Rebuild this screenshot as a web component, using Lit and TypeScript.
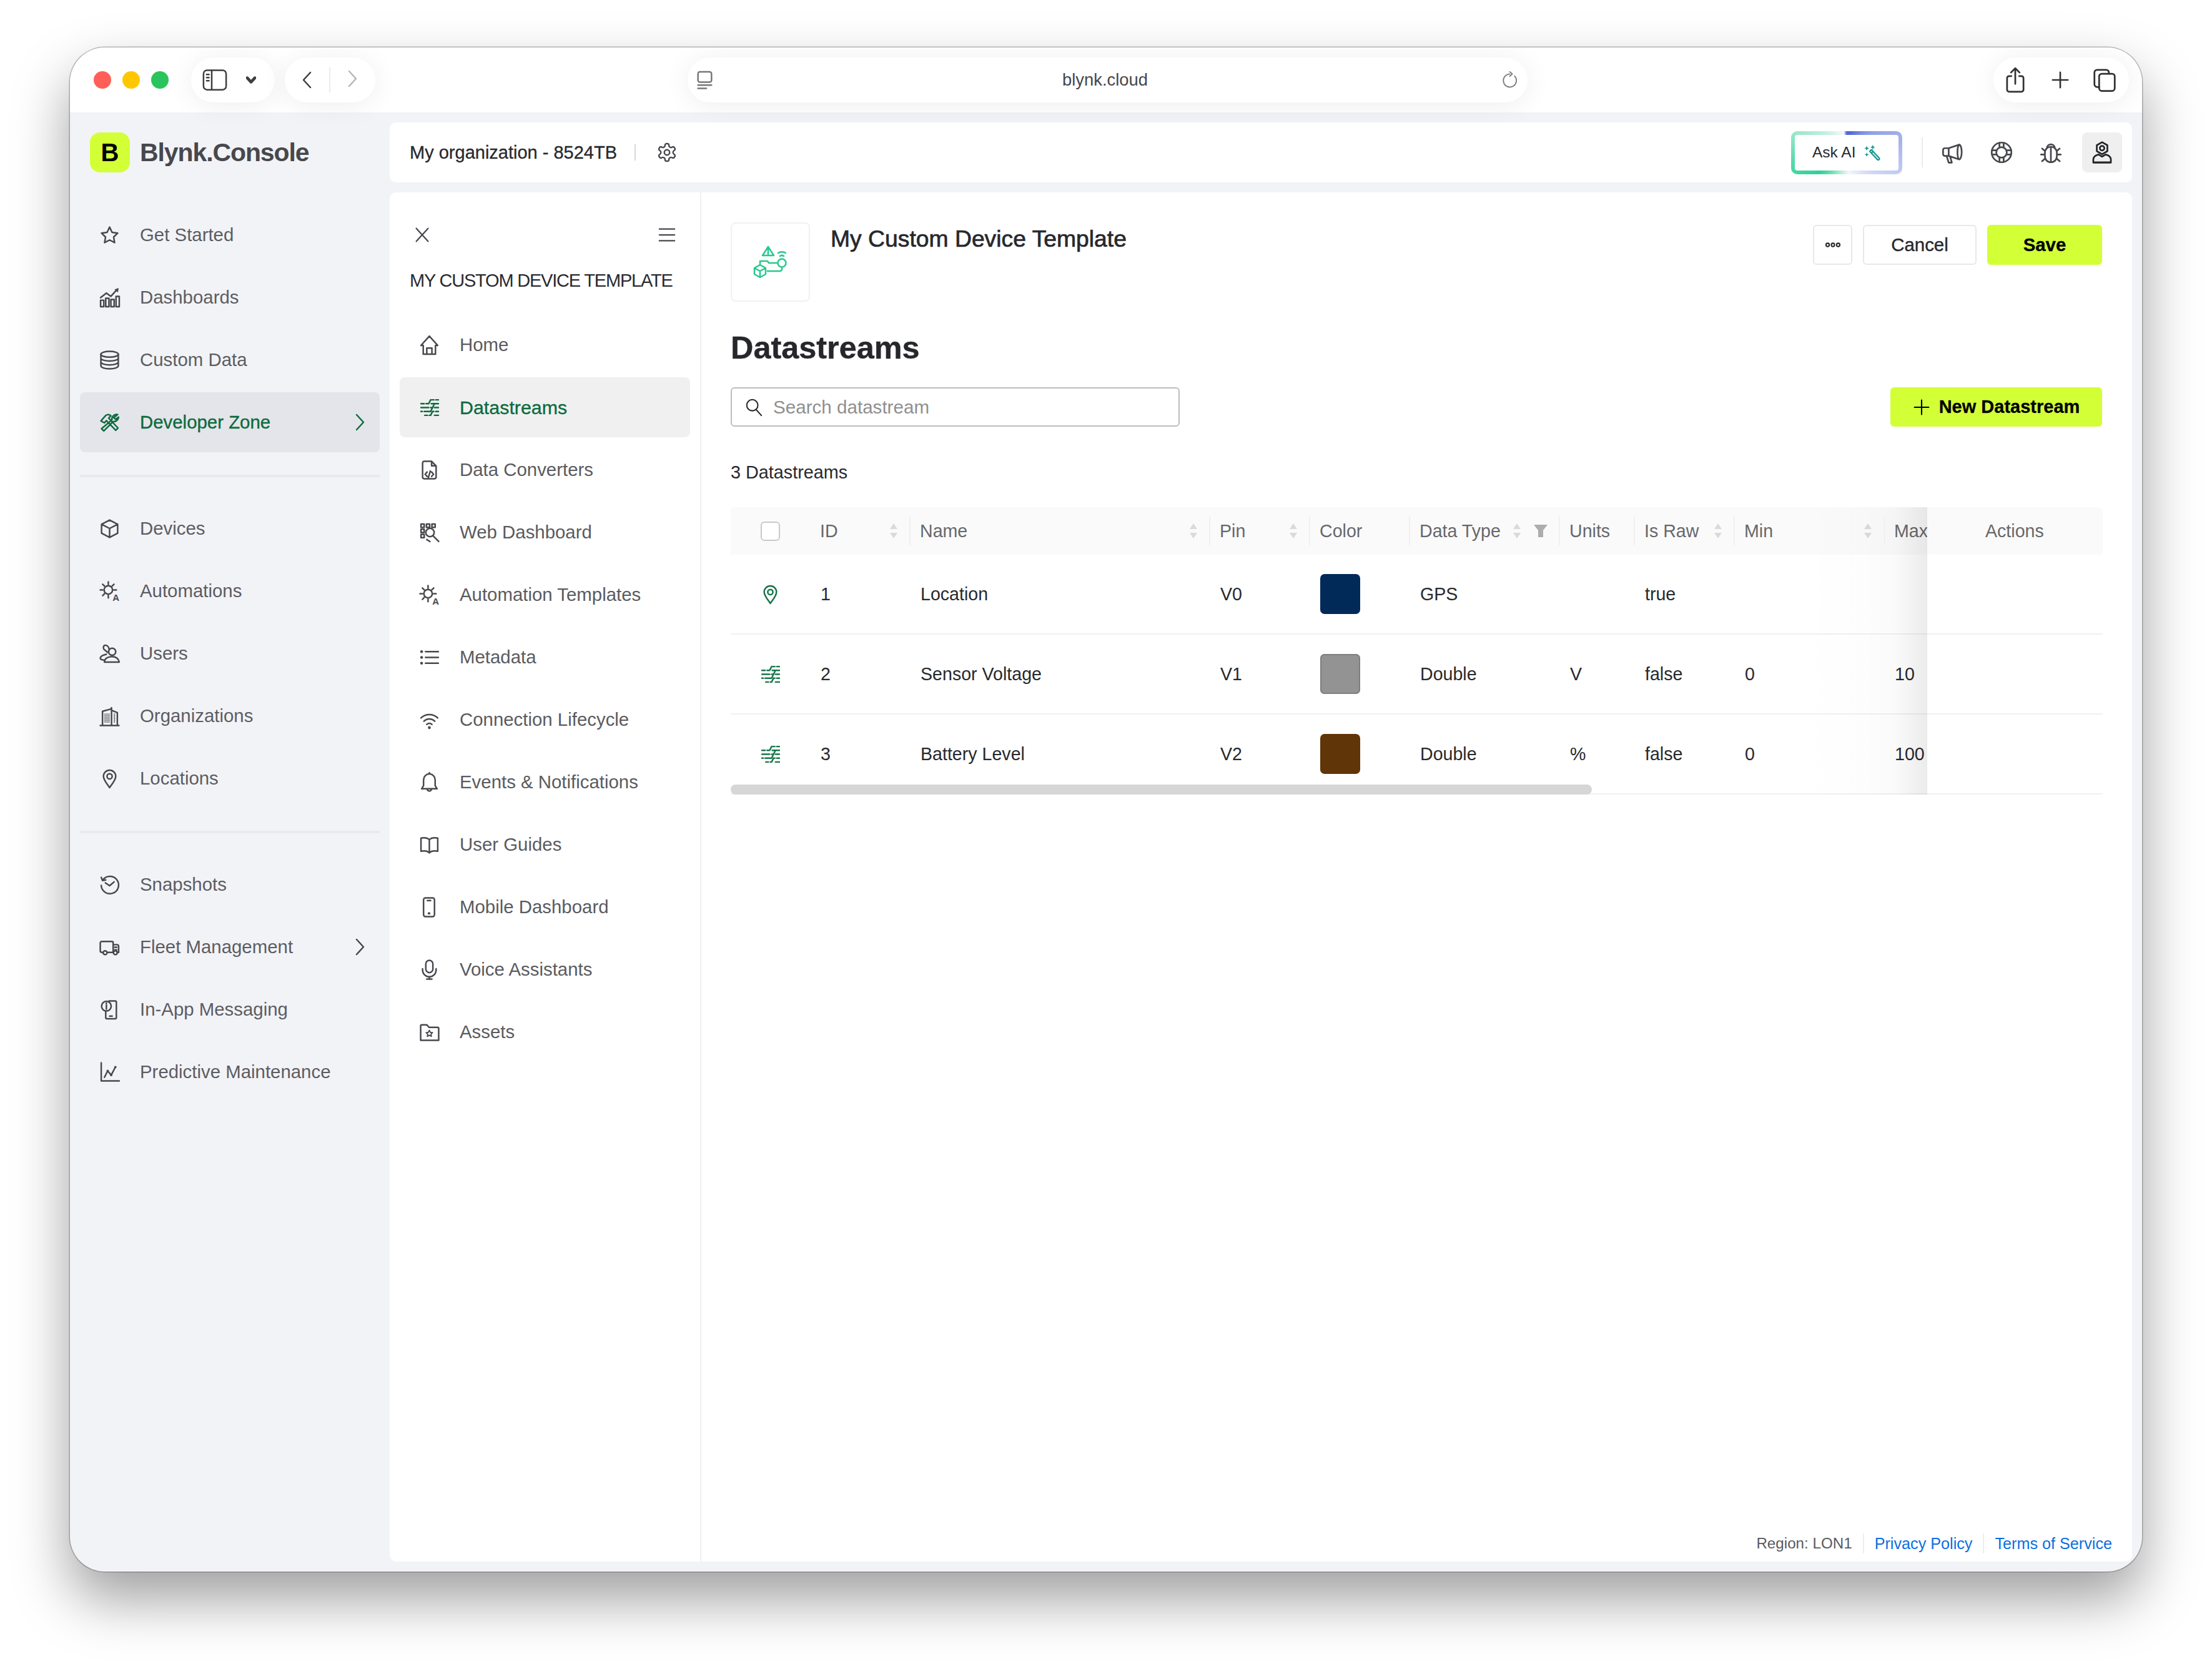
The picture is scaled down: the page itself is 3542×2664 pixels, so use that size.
import { LitElement, css, html, svg, nothing } from 'lit';
import { customElement } from 'lit/decorators.js';

// all icons are drawn on a 32 unit grid
const icons: Record<string, unknown> = {
  star: svg`<path d="M16 3.5l3.9 8.1 8.7 1.2-6.3 6.1 1.5 8.7L16 23.5l-7.8 4.1 1.5-8.7-6.3-6.1 8.7-1.2z"/>`,
  chart: svg`<path d="M2 20h5v10H2zM10 17h5v13h-5zM18 19h5v11h-5zM26 14h5v16h-5zM2 16l9-7 7 5 9-10"/><path class="solid" d="M23.5 3.5L30 1l-1 7z"/>`,
  database: svg`<ellipse cx="16" cy="7" rx="13.5" ry="4.5"/><path d="M2.5 7v18c0 2.5 6 4.5 13.5 4.5S29.5 27.5 29.5 25V7M2.5 13c0 2.5 6 4.5 13.5 4.5S29.5 15.5 29.5 13M2.5 19c0 2.5 6 4.5 13.5 4.5S29.5 21.5 29.5 19"/>`,
  tools: svg`<path d="M2.5 13.5L10 5c2.5-2 6-2 8 .5l-3.5 3.5L29 24.5 25.5 28 11 13l-3 3.5zM28.5 3.5A7.5 7.5 0 0 0 19.5 12L3.5 25.5 7 29l14.5-14.5A7.5 7.5 0 0 0 30 7.5L25.5 11 22.5 8.5z"/>`,
  cube: svg`<path d="M16 2.5l12.5 6.5v14L16 29.5 3.5 23V9zM3.5 9L16 15.5 28.5 9M16 15.5v14"/>`,
  auto: svg`<circle cx="14" cy="14" r="6.5"/><path d="M14 1.5v4M14 22.5v4M1.5 14h4M22.5 14h4M5.2 5.2l3 3M22.8 5.2l-3 3M5.2 22.8l3-3"/><text class="glyph" x="20.5" y="31" font-size="14.5">A</text>`,
  users: svg`<circle cx="20" cy="13" r="5.5"/><path d="M8 29c0-5 5-8.5 11.5-8.5S30 24 31 29zM15 8.5C14.5 5 12 3 9.5 3 6.5 3 5.5 6.5 7 9l6 5M11 17c-5 1-9 3-9.5 6 0 1.5 2 2.5 5.5 3"/>`,
  building: svg`<path d="M5 30V8.5L18 5l1-2v27M19 7l9 3.5V30M1.5 30.5h29"/><path class="dots" d="M9 12v15M12 12v15M15 12v15M23.5 12v15"/>`,
  pin: svg`<path d="M16 30C11.5 23.5 6.5 18 6.5 12.5a9.5 9.5 0 0 1 19 0C25.5 18 20.5 23.5 16 30z"/><circle cx="16" cy="12.5" r="4"/>`,
  snapshot: svg`<path d="M5.5 8.5A13.5 13.5 0 1 1 3 17M3 4.5l2 5 5-1M9.5 13l6.5 4.5 7-6"/>`,
  truck: svg`<path d="M6 24H4a2.5 2.5 0 0 1-2.5-2.5v-12A2.5 2.5 0 0 1 4 7h15.5a2 2 0 0 1 2 2v15H12M21.5 12h6c1.5 0 2.5 1 2.5 2.5V24h-2.5M21.5 24h.5M24 16h3M24 20h3"/><circle cx="9" cy="24.5" r="3"/><circle cx="25" cy="24.5" r="3"/>`,
  inapp: svg`<circle cx="11" cy="10.5" r="7.5"/><path d="M11 9v6M11 5.5V7M15 2.5h9.5a2 2 0 0 1 2 2V28a2 2 0 0 1-2 2H12a2 2 0 0 1-2-2v-9M16 26h4"/>`,
  predict: svg`<path d="M3 1.5V29.5h28M8 24l5-10 5.5 6.5L25 8"/><circle class="solid" cx="13" cy="14" r="1.8"/><circle class="solid" cx="18.5" cy="20.5" r="1.8"/><circle class="solid" cx="25" cy="8" r="1.8"/>`,
  home: svg`<path d="M16 2L3 16.5h3.5V30h19V16.5H29zM12 30V20.5h8V30"/>`,
  streams: svg`<path d="M20 4h3M26 4h4M19 10h11M3 10h5M11 10h4l3-6M3 16h12M18 16h3l3-6M24 16h6M3 22h2M8 22h10l3-6M21 22h2M26 22h4M9 28h4M16 28h2l3-6M24 28h6"/>`,
  code: svg`<path d="M19.5 2.5H8A2.5 2.5 0 0 0 5.5 5v22A2.5 2.5 0 0 0 8 29.5h16a2.5 2.5 0 0 0 2.5-2.5V9.5zM19.5 2.5V9.5h7M12.5 19l-3 3.5 3 3.5M19.5 19l3 3.5-3 3.5M17.5 17.5l-3 10"/>`,
  grid: svg`<path d="M3 3h5v5H3zM11.5 3h5v5h-5zM20 3h5v5h-5zM3 11h5v5H3zM3 19h5v5H3z"/><circle cx="17" cy="16" r="6.5"/><path d="M21.5 21l9 9M12 27l5 3"/>`,
  list: svg`<path d="M10 7h20M10 16h20M10 25h20"/><circle class="solid" cx="4" cy="7" r="2.2"/><circle class="solid" cx="4" cy="16" r="2.2"/><circle class="solid" cx="4" cy="25" r="2.2"/>`,
  wifi: svg`<path d="M3 13c7.5-7 18.5-7 26 0M7.5 18c5-4.5 12-4.5 17 0M12 23c2.5-2 5.5-2 8 0"/><circle class="solid" cx="16" cy="28" r="2.2"/>`,
  bell: svg`<path d="M16 3a9 9 0 0 0-9 9v9l-3 5h24l-3-5v-9a9 9 0 0 0-9-9zM16 1v2M12.5 26a3.5 3.5 0 0 0 7 0"/>`,
  book: svg`<path d="M16 8c-3-3-8-3.5-13-2.5V26c5-1 10-.5 13 2.5 3-3 8-3.5 13-2.5V5.5C24 4.5 19 5 16 8zM16 8v20.5"/>`,
  phone: svg`<rect x="7" y="1.5" width="17" height="29" rx="3"/><path d="M13 5.5h5"/><circle class="solid" cx="15.5" cy="25.5" r="2"/>`,
  mic: svg`<rect x="10.5" y="1.5" width="11" height="19" rx="5.5"/><path d="M5.5 14.5v2a10.5 10.5 0 0 0 21 0v-2M16 27v3.5M12 30.5h8"/>`,
  folder: svg`<path d="M2.5 28.5V6A1.5 1.5 0 0 1 4 4.5h8l3.5 4H29a1.5 1.5 0 0 1 1.5 1.5v18.5z"/><path d="M16 13l1.5 3.2 3.5.4-2.5 2.4.7 3.5-3.2-1.800-3.2 1.800.7-3.5-2.5-2.4 3.5-.4z" stroke-width="1.8"/>`,
  gear: svg`<g transform="scale(1.333)" stroke-width="1.7"><path d="M12.22 2h-.44a2 2 0 0 0-2 2v.18a2 2 0 0 1-1 1.73l-.43.25a2 2 0 0 1-2 0l-.15-.08a2 2 0 0 0-2.73.73l-.22.38a2 2 0 0 0 .73 2.73l.15.1a2 2 0 0 1 1 1.72v.51a2 2 0 0 1-1 1.74l-.15.09a2 2 0 0 0-.73 2.73l.22.38a2 2 0 0 0 2.73.73l.15-.08a2 2 0 0 1 2 0l.43.25a2 2 0 0 1 1 1.73V20a2 2 0 0 0 2 2h.44a2 2 0 0 0 2-2v-.18a2 2 0 0 1 1-1.73l.43-.25a2 2 0 0 1 2 0l.15.08a2 2 0 0 0 2.73-.73l.22-.39a2 2 0 0 0-.73-2.73l-.15-.08a2 2 0 0 1-1-1.74v-.5a2 2 0 0 1 1-1.74l.15-.09a2 2 0 0 0 .73-2.73l-.22-.38a2 2 0 0 0-2.73-.73l-.15.08a2 2 0 0 1-2 0l-.43-.25a2 2 0 0 1-1-1.73V4a2 2 0 0 0-2-2z"/><circle cx="12" cy="12" r="3"/></g>`,
  wand: svg`<path d="M12.5 14l3-3 14 15a2 2 0 0 1-3 3zM15.5 17l3-3"/><path class="solid" stroke="none" d="M7 4l1.3 3.2L11.5 8.5 8.3 9.8 7 13 5.7 9.8 2.5 8.5l3.2-1.3zM18 2l1.3 3.2L22.5 6.5l-3.2 1.3L18 11l-1.3-3.2-3.2-1.3 3.2-1.3zM7 16l1.1 2.9L11 20l-2.9 1.1L7 24l-1.1-2.9L3 20l2.9-1.1z"/>`,
  megaphone: svg`<path d="M11 10l15-5c2 0 3.5 5 3.5 10.5S28 26 26 26l-15-5H5.5A2.5 2.5 0 0 1 3 18.5v-6A2.5 2.5 0 0 1 5.5 10zM11 10v11M26 5c-1.5 1-2.5 5-2.5 10.5S24.5 25 26 26M8 21l3 9.5h4.5L13 22"/>`,
  buoy: svg`<circle cx="16" cy="16" r="14"/><circle cx="16" cy="16" r="7.5"/><path d="M13 2.5V9M19 2.5V9M13 23v6.5M19 23v6.5M2.5 13H9M2.5 19H9M23 13h6.5M23 19h6.5"/>`,
  bug: svg`<path d="M16 8c-5 0-8.5 3.5-8.5 9v4c0 5.5 3.5 9 8.5 9s8.5-3.5 8.5-9v-4c0-5.5-3.5-9-8.5-9zM16 8v22M10.5 9.5C11 3 21 3 21.5 9.5M7.5 14L3.5 10.5M24.5 14l4-3.5M7.5 19H2M24.5 19H30M7.5 25l-4 3.5M24.5 25l4 3.5"/>`,
  account: svg`<path d="M16 1.5l7.5 4.3v8.4L16 18.5l-7.5-4.3V5.8z"/><circle cx="16" cy="10" r="3.2"/><path d="M11 19c-4 1-7.5 3-7.5 7v4h25v-4c0-4-3.5-6-7.500-7l-5 3zM3.500 30.500h25"/>`,
  sideview: svg`<rect x="1.5" y="3.5" width="29" height="25" rx="4.5"/><path d="M12 3.5v25M5.5 9h3M5.5 13h3M5.5 17h3"/>`,
  reader: svg`<rect x="5.5" y="3" width="21" height="16" rx="3"/><path d="M5.5 23.5h21M5.5 28.5h13"/>`,
  reload: svg`<path d="M24.5 8.5A11.5 11.5 0 1 1 16 5M16 1l4.5 4-4.5 4"/>`,
  share: svg`<path d="M11 11H8a2.5 2.5 0 0 0-2.5 2.5v15A2.5 2.5 0 0 0 8 31h16a2.5 2.5 0 0 0 2.5-2.5v-15A2.5 2.5 0 0 0 24 11h-3M16 21V1.5M10.5 6.5L16 1l5.5 5.5"/>`,
  plus: svg`<path d="M16 3v26M3 16h26"/>`,
  tabs: svg`<rect x="9" y="8" width="20" height="22" rx="3.5"/><path d="M9 25H6.5A3.5 3.5 0 0 1 3 21.5v-15A3.5 3.5 0 0 1 6.5 3H18a3.5 3.5 0 0 1 3.5 3.5V8"/>`,
  close: svg`<path d="M6 5l20 22M26 5L6 27"/>`,
  menu: svg`<path d="M3 6h26M3 16h26M3 26h26"/>`,
  search: svg`<circle cx="13.5" cy="12.5" r="9.5"/><path d="M20 20l9 10"/>`,
  dots: svg`<circle cx="7" cy="16" r="2.8"/><circle cx="16" cy="16" r="2.8"/><circle cx="25" cy="16" r="2.8"/>`,
};

function icon(name: string, cls = '') {
  return html`<svg class="ico ${cls}" viewBox="0 0 32 32" aria-hidden="true">${icons[name]}</svg>`;
}

const chevron = html`<svg class="chev" viewBox="0 0 17 28"><path d="M3 2l11 12L3 26"/></svg>`;
const chevronLeft = html`<svg class="chev" viewBox="0 0 17 28"><path d="M14 2L3 14l11 12"/></svg>`;
const chevronDown = html`<svg class="chev down" viewBox="0 0 17 17"><path d="M2 5l6.5 7L15 5"/></svg>`;
const sort = html`<svg class="sort" viewBox="0 0 14 24"><path d="M7 0l6 9H1zM7 24l-6-9h12z"/></svg>`;

const sideTop = [
  ['star', 'Get Started'],
  ['chart', 'Dashboards'],
  ['database', 'Custom Data'],
  ['tools', 'Developer Zone', 'active', 'more'],
];
const sideMiddle = [
  ['cube', 'Devices'],
  ['auto', 'Automations'],
  ['users', 'Users'],
  ['building', 'Organizations'],
  ['pin', 'Locations'],
];
const sideBottom = [
  ['snapshot', 'Snapshots'],
  ['truck', 'Fleet Management', '', 'more'],
  ['inapp', 'In-App Messaging'],
  ['predict', 'Predictive Maintenance'],
];

const templateNav = [
  ['home', 'Home'],
  ['streams', 'Datastreams', 'active'],
  ['code', 'Data Converters'],
  ['grid', 'Web Dashboard'],
  ['auto', 'Automation Templates'],
  ['list', 'Metadata'],
  ['wifi', 'Connection Lifecycle'],
  ['bell', 'Events & Notifications'],
  ['book', 'User Guides'],
  ['phone', 'Mobile Dashboard'],
  ['mic', 'Voice Assistants'],
  ['folder', 'Assets'],
];

const rows = [
  { icon: 'pin', id: '1', name: 'Location', pin: 'V0', color: '#012a58', type: 'GPS', units: '', raw: 'true', min: '', max: '' },
  { icon: 'streams', id: '2', name: 'Sensor Voltage', pin: 'V1', color: '#939393', edge: '#7f7f7f', type: 'Double', units: 'V', raw: 'false', min: '0', max: '10' },
  { icon: 'streams', id: '3', name: 'Battery Level', pin: 'V2', color: '#603508', type: 'Double', units: '%', raw: 'false', min: '0', max: '100' },
];

@customElement('app-root')
export class AppRoot extends LitElement {
  static styles = css`
    :host {
      display: block;
      box-sizing: border-box;
      width: 3542px;
      height: 2664px;
      padding: 76px 112px 0;
      background: #fff;
      font-family: 'Liberation Sans', Arial, sans-serif;
      color: #28292d;
      overflow: hidden;
    }
    * { box-sizing: border-box; }
    .ico {
      width: 33px;
      height: 33px;
      flex: none;
      fill: none;
      stroke: currentColor;
      stroke-width: 2.4;
      stroke-linecap: round;
      stroke-linejoin: round;
      overflow: visible;
    }
    .ico .solid { fill: currentColor; stroke: none; }
    .ico .dots { stroke-width: 2; stroke-dasharray: 1.5 1; stroke-linecap: butt; }
    .ico .glyph { fill: currentColor; stroke: none; font-weight: 700; font-family: 'Liberation Sans', sans-serif; }
    .chev {
      width: 17px;
      height: 28px;
      flex: none;
      fill: none;
      stroke: currentColor;
      stroke-width: 2.5;
      stroke-linecap: round;
      stroke-linejoin: round;
    }
    .sort { width: 14px; height: 24px; flex: none; fill: #dadada; }

    .window {
      width: 3318px;
      height: 2440px;
      border-radius: 56px;
      overflow: hidden;
      background: #f2f3f7;
      display: flex;
      flex-direction: column;
      box-shadow: 0 0 0 1.5px rgba(80, 80, 80, 0.38), 0 44px 90px rgba(0, 0, 0, 0.38);
    }

    .titlebar {
      height: 104px;
      flex: none;
      background: #fff;
      display: flex;
      align-items: center;
      padding: 0 21px 0 38px;
      position: relative;
      z-index: 2;
    }
    .lights { display: flex; gap: 18px; margin-right: 36px; }
    .lights span { width: 28px; height: 28px; border-radius: 50%; }
    .pill {
      height: 72px;
      border-radius: 36px;
      background: #fff;
      display: flex;
      align-items: center;
      box-shadow: 0 4px 44px rgba(0, 0, 0, 0.07);
      color: #3d3e42;
    }
    .pill-side { width: 134px; margin-right: 16px; padding-left: 18px; gap: 30px; }
    .pill-side .ico { width: 40px; height: 40px; stroke-width: 2; }
    .pill-side .down { width: 16px; height: 16px; stroke-width: 5; }
    .pill-nav { width: 145px; padding-left: 27px; }
    .pill-nav .chev { height: 30px; }
    .pill-nav i { width: 2px; height: 40px; background: #ececec; margin: 0 27px; }
    .pill-nav .off { color: #b6b6b8; }
    .address {
      width: 1345px;
      margin-left: 500px;
      padding: 0 12px 0 11px;
      justify-content: space-between;
      color: #76777a;
    }
    .address .reload { width: 29px; height: 29px; stroke-width: 2; margin-right: 2px; color: #76777a; }
    .address .url { font-size: 27.4px; color: #46474b; margin-right: 9px; }
    .pill-right { width: 217px; margin-left: auto; padding: 0 19px 0 15px; justify-content: space-between; color: #303135; }
    .pill-right .ico { width: 40px; height: 40px; stroke-width: 2.2; }
    .pill-right .plus { width: 30px; height: 30px; stroke-width: 2.8; }

    .body { flex: 1; display: flex; min-height: 0; }

    .sidebar { width: 512px; flex: none; padding: 32px 16px 0; }
    .logo { display: flex; align-items: center; gap: 16px; height: 64px; margin: 0 0 52px 16px; }
    .logo b {
      width: 64px;
      height: 64px;
      border-radius: 16px;
      background: #d3ff37;
      color: #000;
      font-size: 40px;
      display: grid;
      place-items: center;
    }
    .logo span { font-size: 41px; font-weight: 700; letter-spacing: -1.1px; color: #47484d; }
    .side-group { display: flex; flex-direction: column; gap: 4px; }
    .side-rule { height: 4px; background: #e8e9ee; margin: 36px 0 34px; }

    .item {
      height: 96px;
      flex: none;
      display: flex;
      align-items: center;
      border-radius: 8px;
      color: #5a5b60;
      font-size: 29.4px;
      white-space: nowrap;
    }
    .sidebar .item { padding: 0 23px 0 31px; gap: 32px; color: #5c5d62; }
    .sidebar .item .ico { color: #47484d; }
    .sidebar .item .chev { margin-left: auto; color: #47484d; }
    .sidebar .item.active { background: #e4e5ea; color: #0d6b3d; -webkit-text-stroke: 0.35px #0d6b3d; }
    .sidebar .item.active .ico, .sidebar .item.active .chev { color: #0d6b3d; }

    .main { flex: 1; min-width: 0; display: flex; flex-direction: column; gap: 16px; padding: 16px 16px 16px 0; }

    .topbar {
      height: 96px;
      flex: none;
      background: #fff;
      border-radius: 10px;
      display: flex;
      align-items: center;
      padding: 0 16px 0 32px;
    }
    .org { font-size: 29px; -webkit-text-stroke: 0.3px #28292d; white-space: nowrap; }
    .topbar .rule { width: 2px; height: 26px; background: #d8d8d8; margin: 0 33px 0 28px; }
    .topbar .gear { width: 34px; height: 34px; color: #47484d; }
    .ask {
      margin-left: auto;
      width: 178px;
      height: 69px;
      border: 6px solid transparent;
      border-radius: 10px;
      background:
        linear-gradient(#fff, #fff) padding-box,
        conic-gradient(#5468d4 10deg, #8f9fe4 50deg, #b8c4f0 100deg, #e4e7fa 150deg, #f2f7f8 175deg, #9de8cc 205deg, #2fd097 235deg, #58dbab 262deg, #b0ecd6 300deg, #e4f6f0 335deg, #f6f7fc 352deg, #5468d4 360deg) border-box;
      display: flex;
      align-items: center;
      padding-left: 28px;
      gap: 12px;
      font-size: 24.5px;
      white-space: nowrap;
    }
    .ask .ico { width: 28px; height: 28px; color: #199a8e; stroke-width: 2.6; }
    .tools { display: flex; align-items: center; margin-left: 31px; }
    .tools > i { width: 2px; height: 48px; background: #ececec; margin-right: 29px; }
    .tools > .ico { width: 36px; height: 36px; color: #47484d; margin-right: 43px; }
    .tools > .ico:nth-of-type(3) { margin-right: 32px; }
    .me { width: 64px; height: 64px; border-radius: 8px; background: #efefef; display: grid; place-items: center; color: #232428; }
    .me .ico { width: 36px; height: 36px; }

    .card { flex: 1; min-height: 0; background: #fff; border-radius: 10px; display: flex; }

    .nav { width: 499px; flex: none; border-right: 2px solid #f0f0f1; padding-top: 48px; }
    .nav-head { display: flex; justify-content: space-between; height: 40px; align-items: center; padding: 0 38px 0 37px; color: #47484d; }
    .nav-head .ico { width: 30px; height: 30px; }
    .nav h2 {
      margin: 35px 0 37px 32px;
      font-size: 29px;
      line-height: 36px;
      font-weight: 400;
      letter-spacing: -1.2px;
      color: #2a2b30;
      white-space: nowrap;
    }
    .nav-list { display: flex; flex-direction: column; gap: 4px; padding: 0 16px; }
    .nav-list .item { padding-left: 31px; gap: 32px; }
    .nav-list .item .ico { color: #47484d; }
    .nav-list .item.active { background: #f0f0f1; color: #0d6b3d; font-size: 30.4px; -webkit-text-stroke: 0.35px #0d6b3d; }
    .nav-list .item.active .ico { color: #0d6b3d; }

    .content { flex: 1; min-width: 0; display: flex; flex-direction: column; padding: 48px 47px 13px; }
    .head { display: flex; height: 127px; flex: none; }
    .tile {
      width: 127px;
      height: 127px;
      border: 2.5px solid #f1f1f2;
      border-radius: 8px;
      display: grid;
      place-items: center;
      margin-right: 33px;
    }
    .tile svg { width: 90px; height: 80px; fill: none; stroke: #27c98f; stroke-width: 2.5; stroke-linejoin: round; stroke-linecap: round; }
    .head h1 { margin: 0; font-size: 37.3px; line-height: 52px; font-weight: 400; -webkit-text-stroke: 0.7px #232428; white-space: nowrap; }
    .actions { margin-left: auto; margin-top: 4px; display: flex; gap: 17px; height: 64px; padding-right: 1px; }
    .btn {
      height: 64px;
      border-radius: 6px;
      border: 2.5px solid #e8e8e9;
      background: #fff;
      display: flex;
      align-items: center;
      justify-content: center;
      font-size: 29.4px;
      -webkit-text-stroke: 0.4px #28292d;
      white-space: nowrap;
    }
    .btn .ico { width: 30px; height: 30px; stroke-width: 2.2; }
    .btn-more { width: 63px; }
    .btn-cancel { width: 182px; }
    .btn-primary { background: #d3ff37; border: none; font-weight: 700; color: #000; -webkit-text-stroke: 0.3px #000; }
    .btn-save { width: 184px; }

    h3 { margin: 44px 0 33px; font-size: 50.4px; line-height: 60px; font-weight: 700; color: #26272b; -webkit-text-stroke: 0.4px #26272b; }
    .tools-row { display: flex; justify-content: space-between; padding-right: 1px; }
    .search {
      width: 719px;
      height: 63px;
      border: 2.5px solid #bdbdbd;
      border-radius: 6px;
      display: flex;
      align-items: center;
      padding-left: 20px;
      gap: 16px;
      font-size: 29.6px;
      color: #8f8f8f;
      white-space: nowrap;
    }
    .search .ico { width: 30px; height: 30px; color: #28292d; stroke-width: 2.2; }
    .btn-new { width: 339px; height: 63px; gap: 14px; font-size: 29px; }
    .btn-new .ico { width: 28px; height: 28px; stroke-width: 2.4; }
    .count { margin: 55px 0 38px; font-size: 28.8px; line-height: 36px; }

    .table { position: relative; width: 2197px; }
    .row {
      display: grid;
      grid-template-columns: 127px 160px 480px 160px 160px 240px 120px 160px 240px 69px 281px;
      height: 128px;
      border-bottom: 2px solid #f0f0f1;
      align-items: center;
      font-size: 28.6px;
    }
    .row > div { padding-left: 17px; white-space: nowrap; overflow: hidden; }
    .row > .pick { padding: 0; display: flex; justify-content: center; color: #17744a; }
    .row.th { height: 76px; background: #fafafa; border: none; color: #67686c; border-radius: 6px 6px 0 0; }
    .th > div {
      position: relative;
      height: 100%;
      display: flex;
      align-items: center;
      padding-right: 19px;
      overflow: visible;
      padding-left: 16px;
    }
    .th > .cut { overflow: hidden; padding-right: 0; }
    .th > div + div:not(.pick):not(.stuck)::before {
      content: '';
      position: absolute;
      left: -1px;
      top: 15px;
      width: 2px;
      height: 46px;
      background: #f0f0f1;
    }
    .th .pick + div::before { display: none; }
    .th .sort { margin-left: auto; }
    .th .filter { width: 22px; height: 20px; margin-left: 20px; fill: #adadad; flex: none; }
    .check { width: 31px; height: 31px; border: 2.5px solid #c9c9c9; border-radius: 6px; background: #fff; }
    .swatch { width: 64px; height: 64px; border-radius: 7px; }
    .row > .stuck { background: transparent; padding-left: 93px; }
    .fade {
      position: absolute;
      top: 0;
      bottom: 0;
      right: 281px;
      width: 200px;
      background: linear-gradient(to right, rgba(0, 0, 0, 0), rgba(0, 0, 0, 0.006) 50%, rgba(0, 0, 0, 0.02) 74%, rgba(0, 0, 0, 0.08));
      pointer-events: none;
    }
    .thumb {
      position: absolute;
      left: 0;
      bottom: 0;
      width: 1379px;
      height: 16px;
      border-radius: 8px;
      background: #d6d6d6;
    }

    .foot {
      margin-top: auto;
      display: flex;
      justify-content: flex-end;
      align-items: center;
      font-size: 25.2px;
      color: #5a5a5e;
      margin-right: -15px;
      white-space: nowrap;
    }
    .foot .region { font-size: 24.2px; }
    .foot a { color: #0b6fe0; text-decoration: none; }
    .foot i { width: 2px; height: 32px; background: #eeeeef; margin: 0 17px; }
  `;

  private sideItem(row: string[]) {
    const [ico, label, state, more] = row;
    return html`<div class="item ${state ?? ''}">${icon(ico)}<span>${label}</span>${more ? chevron : nothing}</div>`;
  }

  render() {
    return html`
      <div class="window">
        <div class="titlebar">
          <div class="lights">
            <span style="background:#ff5f57"></span>
            <span style="background:#ffc700"></span>
            <span style="background:#2ac45c"></span>
          </div>
          <div class="pill pill-side">${icon('sideview')}${chevronDown}</div>
          <div class="pill pill-nav">${chevronLeft}<i></i><span class="off">${chevron}</span></div>
          <div class="pill address">
            ${icon('reader')}
            <span class="url">blynk.cloud</span>
            ${icon('reload', 'reload')}
          </div>
          <div class="pill pill-right">${icon('share')}${icon('plus', 'plus')}${icon('tabs')}</div>
        </div>
        <div class="body">
          <aside class="sidebar">
            <div class="logo"><b>B</b><span>Blynk.Console</span></div>
            <div class="side-group">${sideTop.map((r) => this.sideItem(r))}</div>
            <div class="side-rule"></div>
            <div class="side-group">${sideMiddle.map((r) => this.sideItem(r))}</div>
            <div class="side-rule"></div>
            <div class="side-group">${sideBottom.map((r) => this.sideItem(r))}</div>
          </aside>
          <div class="main">
            <div class="topbar">
              <span class="org">My organization - 8524TB</span>
              <span class="rule"></span>
              ${icon('gear', 'gear')}
              <div class="ask"><span>Ask AI</span>${icon('wand')}</div>
              <div class="tools">
                <i></i>${icon('megaphone')}${icon('buoy')}${icon('bug')}
                <div class="me">${icon('account')}</div>
              </div>
            </div>
            <div class="card">
              <nav class="nav">
                <div class="nav-head">${icon('close')}${icon('menu')}</div>
                <h2>MY CUSTOM DEVICE TEMPLATE</h2>
                <div class="nav-list">
                  ${templateNav.map(([ico, label, state]) => html`<div class="item ${state ?? ''}">${icon(ico)}<span>${label}</span></div>`)}
                </div>
              </nav>
              <section class="content">
                <div class="head">
                  <div class="tile">
                    <svg viewBox="0 0 90 80">
                      <path d="M41 15L32 29H50zM41 15V29"/>
                      <path d="M57 25c3-2.5 9-2.5 12 0M60 30c2-1.5 4-1.5 6 0"/>
                      <circle cx="63" cy="41" r="6.5"/>
                      <path d="M28 44V38H40l2 3H55"/>
                      <path d="M28 44l9 5v10l-9 5-9-5V49zM19 49l9 5 9-5M28 54V64"/>
                      <path d="M40 54H60a3 3 0 0 0 3-3V48"/>
                    </svg>
                  </div>
                  <h1>My Custom Device Template</h1>
                  <div class="actions">
                    <div class="btn btn-more">${icon('dots')}</div>
                    <div class="btn btn-cancel">Cancel</div>
                    <div class="btn btn-primary btn-save">Save</div>
                  </div>
                </div>
                <h3>Datastreams</h3>
                <div class="tools-row">
                  <div class="search">${icon('search')}<span>Search datastream</span></div>
                  <div class="btn btn-primary btn-new">${icon('plus')}<span>New Datastream</span></div>
                </div>
                <div class="count">3 Datastreams</div>
                <div class="table">
                  <div class="row th">
                    <div class="pick"><span class="check"></span></div>
                    <div>ID${sort}</div>
                    <div>Name${sort}</div>
                    <div>Pin${sort}</div>
                    <div>Color</div>
                    <div>Data Type${sort}<svg class="filter" viewBox="0 0 22 20"><path d="M0 0h22l-7 9v11H7V9z"/></svg></div>
                    <div>Units</div>
                    <div>Is Raw${sort}</div>
                    <div>Min${sort}</div>
                    <div class="cut">Max</div>
                    <div class="stuck">Actions</div>
                  </div>
                  ${rows.map(
                    (r) => html`<div class="row">
                      <div class="pick">${icon(r.icon)}</div>
                      <div>${r.id}</div>
                      <div>${r.name}</div>
                      <div>${r.pin}</div>
                      <div><div class="swatch" style="background:${r.color};${r.edge ? `box-shadow:inset 0 0 0 2px ${r.edge}` : ''}"></div></div>
                      <div>${r.type}</div>
                      <div>${r.units}</div>
                      <div>${r.raw}</div>
                      <div>${r.min}</div>
                      <div>${r.max}</div>
                      <div class="stuck"></div>
                    </div>`,
                  )}
                  <div class="fade"></div>
                  <div class="thumb"></div>
                </div>
                <div class="foot">
                  <span class="region">Region: LON1</span><i></i><a>Privacy Policy</a><i></i><a>Terms of Service</a>
                </div>
              </section>
            </div>
          </div>
        </div>
      </div>
    `;
  }
}
